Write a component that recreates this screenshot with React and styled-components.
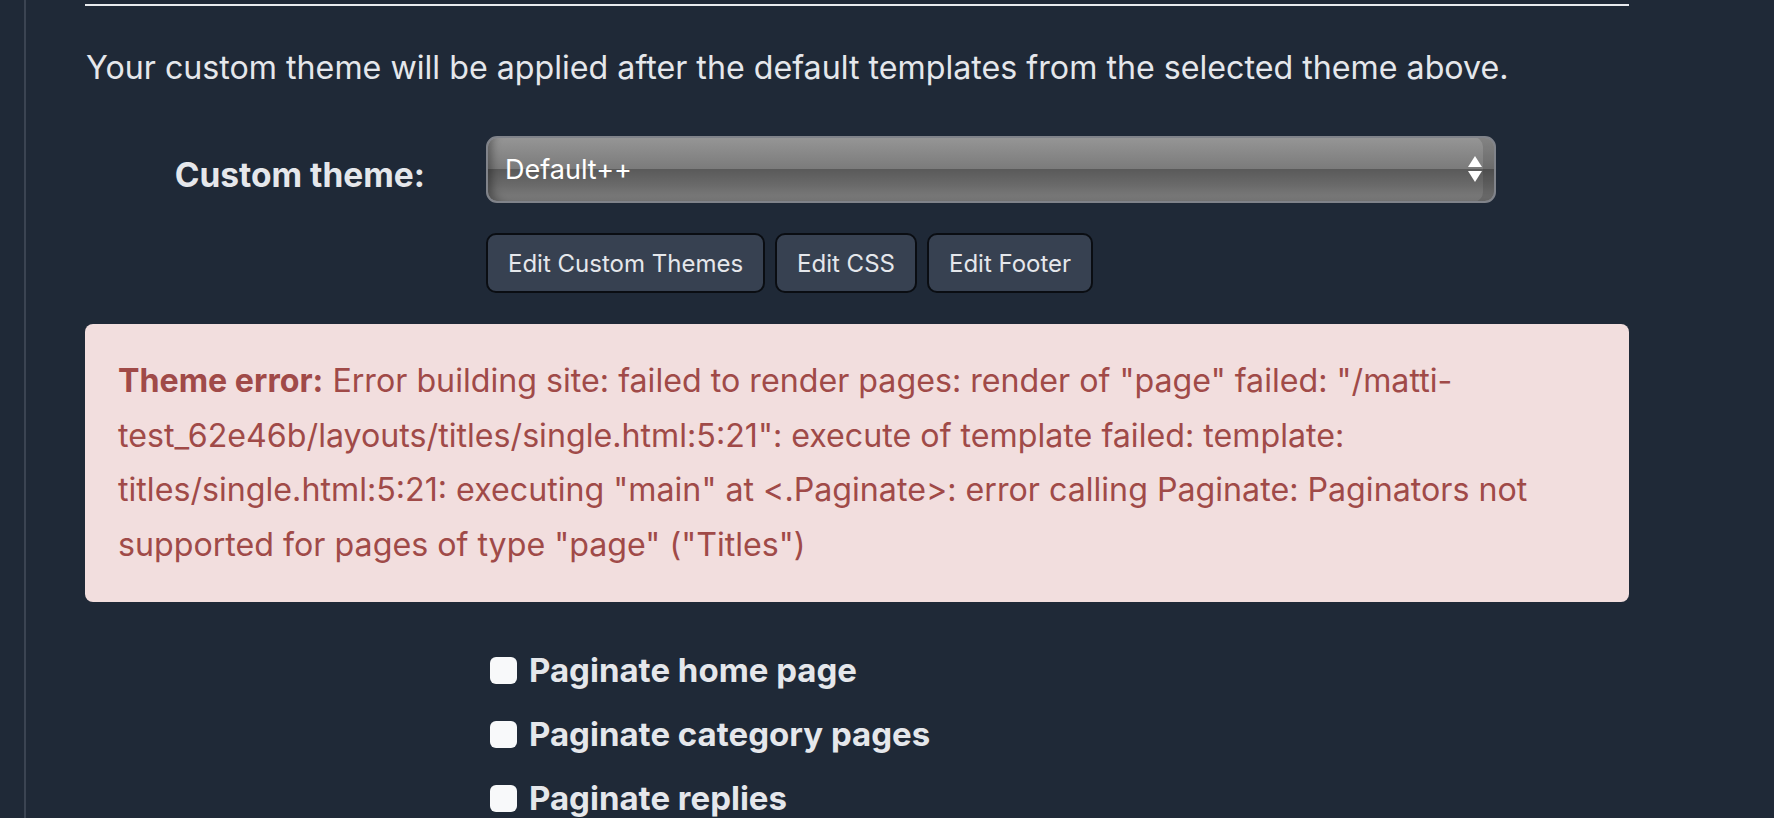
import React from 'react'
import styled, { createGlobalStyle } from 'styled-components'

const GlobalStyle = createGlobalStyle`
  html, body {
    margin: 0;
    padding: 0;
    background: #1f2937;
    color: #e5e7eb;
    font-family: Inter, "Noto Sans", "Liberation Sans", sans-serif;
  }
`;

const Shell = styled.div`
  margin-left: 24px;
  border-left: 2px solid #3b4452;
  min-height: 818px;
  padding-left: 59px;
  box-sizing: border-box;
  overflow: hidden;
`;

const Content = styled.div`
  width: 1544px;
`;

const Rule = styled.div`
  height: 2px;
  margin-top: 4px;
  background: #e8eaee;
`;

const Intro = styled.p`
  margin: 42px 0 0 1px;
  font-size: 32.2px;
  line-height: 40px;
  color: #e5e7eb;
`;

const FieldRow = styled.div`
  display: grid;
  grid-template-columns: 340px 1fr;
  column-gap: 61px;
  align-items: center;
  margin-top: ${p => p.top || 0}px;
`;

const Label = styled.label`
  text-align: right;
  padding-top: 10px;
  font-weight: 700;
  font-size: 33.5px;
  color: #e5e7eb;
`;

const SelectWrap = styled.div`
  position: relative;
  width: 1010px;
  height: 67px;
`;

const Select = styled.select`
  appearance: none;
  -webkit-appearance: none;
  width: 100%;
  height: 100%;
  box-sizing: border-box;
  border: 2px solid #80838a;
  border-radius: 11px;
  padding: 0 0 0 17px;
  font-family: inherit;
  font-size: 27px;
  color: #ffffff;
  outline: none;
  background: linear-gradient(
    to bottom,
    #959595 0%,
    #7b7b7b 49%,
    #5a5a5a 50%,
    #6a6a6a 75%,
    #7f7f7f 100%
  );
  box-shadow:
    inset 10px -4px 8px -6px rgba(0, 0, 0, 0.35),
    inset -12px 0 0 -1px rgba(0, 0, 0, 0.12);
`;

const Arrows = styled.svg`
  position: absolute;
  right: 14px;
  top: 20px;
  pointer-events: none;
`;

const ButtonBar = styled.div`
  display: flex;
  gap: 10px;
`;

const Button = styled.button`
  height: 60px;
  padding: 0 20px;
  background: #374151;
  color: #e5e7eb;
  border: 2px solid #0a0d12;
  border-radius: 10px;
  font-family: inherit;
  font-size: 24px;
  cursor: pointer;
`;

const ErrorBox = styled.div`
  margin-top: 31px;
  padding: 30px 33px;
  background: #f2dede;
  color: #a04a48;
  border-radius: 8px;
  font-size: 32.2px;
  line-height: 54.5px;
`;

const ErrorTitle = styled.strong`
  font-weight: 700;
`;

const Checks = styled.div`
  display: flex;
  flex-direction: column;
  gap: 21px;
`;

const CheckLabel = styled.label`
  display: flex;
  align-items: center;
  gap: 12px;
  font-weight: 700;
  font-size: 33px;
  line-height: 43px;
  color: #e5e7eb;
  padding-left: 4px;
`;

const Box = styled.input`
  appearance: none;
  -webkit-appearance: none;
  margin: 0;
  width: 27px;
  height: 27px;
  border-radius: 6px;
  background: #f8f9fa;
  flex-shrink: 0;
`;

const ThemeSettings = () => {
  const checks = ['Paginate home page', 'Paginate category pages', 'Paginate replies']
  return (
    <>
      <GlobalStyle />
      <Shell>
        <Content>
          <Rule />
          <Intro>Your custom theme will be applied after the default templates from the selected theme above.</Intro>

          <FieldRow top={48}>
            <Label htmlFor="custom-theme">Custom theme:</Label>
            <SelectWrap>
              <Select id="custom-theme" defaultValue="default">
                <option value="default">Default++</option>
              </Select>
              <Arrows width="14" height="26" viewBox="0 0 14 26">
                <path d="M7 0 L14 11 L0 11 Z" fill="#fff" />
                <path d="M0 15 L14 15 L7 26 Z" fill="#fff" />
              </Arrows>
            </SelectWrap>
          </FieldRow>

          <FieldRow top={30}>
            <span />
            <ButtonBar>
              <Button>Edit Custom Themes</Button>
              <Button>Edit CSS</Button>
              <Button>Edit Footer</Button>
            </ButtonBar>
          </FieldRow>

          <ErrorBox>
            <ErrorTitle>Theme error:</ErrorTitle>{' '}
            <span>Error building site: failed to render pages: render of "page" failed: "/matti-test_62e46b/layouts/titles/single.html:5:21": execute of template failed: template: titles/single.html:5:21: executing "main" at &lt;.Paginate&gt;: error calling Paginate: Paginators not supported for pages of type "page" ("Titles")</span>
          </ErrorBox>

          <FieldRow top={47}>
            <span />
            <Checks>
              {checks.map(c => (
                <CheckLabel key={c}>
                  <Box type="checkbox" />
                  {c}
                </CheckLabel>
              ))}
            </Checks>
          </FieldRow>
        </Content>
      </Shell>
    </>
  )
}

export default ThemeSettings
